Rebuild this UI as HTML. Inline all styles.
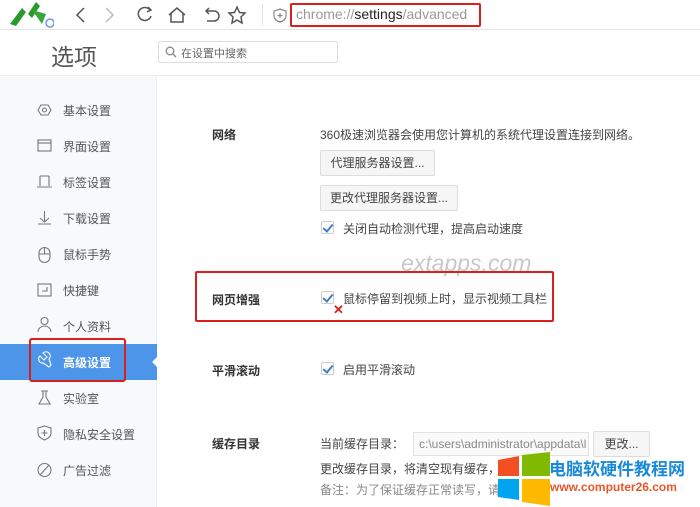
<!DOCTYPE html>
<html><head><meta charset="utf-8"><style>
*{margin:0;padding:0;box-sizing:border-box}
body{width:700px;height:507px;overflow:hidden;background:#fff;font-family:"Liberation Sans","Noto Sans CJK SC",sans-serif;color:#333;position:relative;font-size:12px}
.a{position:absolute;white-space:nowrap}
.side{position:absolute;left:0;top:76px;width:157px;height:431px;background:#f7f9fb;border-right:1px solid #eceff2}
.it{position:absolute;left:63px;font-size:12px;color:#555}
.ic{position:absolute;left:38px;width:14px;height:14px}
.btn{position:absolute;border:1px solid #ddd;background:#f6f6f6;border-radius:2px;font-size:12px;color:#444;text-align:center}
.cb{position:absolute;width:13px;height:13px;border:1px solid #ccc;background:#fff;border-radius:2px}
.cb::after{content:"";position:absolute;left:3px;top:0px;width:4px;height:8px;border:solid #3d7fc8;border-width:0 2px 2px 0;transform:rotate(40deg)}
.lbl{position:absolute;left:212px;font-size:12px;font-weight:bold;color:#333}
</style></head><body>
<!-- top bar -->
<div class="a" style="left:0;top:0;width:700px;height:30px;background:#fff;border-bottom:1px solid #e6e6e6"></div>
<svg class="a" style="left:6px;top:0" width="48" height="28" viewBox="0 0 48 28"><path d="M4 24 L16 8 L22 14 L30 2 L34 6 L26 18 L20 12 L10 26Z" fill="#2a9a2a"/><path d="M26 10 L40 14 L36 24Z" fill="#3aa53a"/><circle cx="44" cy="23" r="4" fill="none" stroke="#6a9be0" stroke-width="1.5"/></svg>
<svg class="a" style="left:70px;top:5px" width="190" height="20" viewBox="0 0 190 20" fill="none" stroke="#555" stroke-width="1.5"><path d="M14 3 L7 10 L14 17"/><path d="M36 3 L43 10 L36 17" stroke="#bbb"/><path d="M80 5 A6.5 6.5 0 1 0 81 11"/><path d="M78 2 L81 5 L77 7"/><path d="M99 10 L107 3 L115 10 M101 8 V17 H113 V8"/><path d="M136 6 H144 A5 5 0 0 1 144 16 H137 M139 3 L136 6 L139 9"/><path d="M167 2 L169.5 7.5 L175 8 L171 12 L172 18 L167 15 L162 18 L163 12 L159 8 L164.5 7.5Z"/></svg>
<div class="a" style="left:262px;top:4px;width:1px;height:22px;background:#e3e3e3"></div>
<svg class="a" style="left:273px;top:8px" width="14" height="15" viewBox="0 0 14 15" fill="none" stroke="#888" stroke-width="1.2"><path d="M7 1 L13 3 V8 C13 11 10 13 7 14 C4 13 1 11 1 8 V3Z"/><path d="M7 5 V10 M4.5 7.5 H9.5"/></svg>
<div class="a" style="left:290px;top:3px;width:191px;height:24px;border:2px solid #d9201c;border-radius:2px"></div>
<div class="a" style="left:296px;top:6px;font-size:14px;color:#999">chrome://<span style="color:#222">settings</span>/advanced</div>
<!-- header -->
<div class="a" style="left:0;top:31px;width:700px;height:45px;border-bottom:1px solid #e9ecef"></div>
<div class="a" style="left:51px;top:38px;font-size:23px;color:#555">选项</div>
<div class="a" style="left:158px;top:41px;width:180px;height:22px;border:1px solid #ddd;border-radius:2px"></div>
<svg class="a" style="left:165px;top:46px" width="12" height="12" viewBox="0 0 12 12" fill="none" stroke="#888" stroke-width="1.3"><circle cx="5" cy="5" r="3.8"/><path d="M8 8 L11 11"/></svg>
<div class="a" style="left:181px;top:45px;font-size:11px;color:#666">在设置中搜索</div>
<!-- sidebar -->
<div class="side"></div>
<div class="a" style="left:0;top:344px;width:157px;height:36px;background:#4d95e9"></div>
<div class="a" style="left:152px;top:356px;width:0;height:0;border:6px solid transparent;border-right-color:#fff;border-left:none"></div>
<div class="a" style="left:29px;top:338px;width:97px;height:44px;border:2px solid #d9201c;border-radius:3px"></div>
<svg class="a" style="left:36px;top:101px" width="18" height="380" viewBox="0 0 18 380" fill="none" stroke="#777" stroke-width="1.1">
<path d="M5 4 H12 L15 9 L12 14 H5 L2 9Z"/><circle cx="8.5" cy="9" r="2"/>
<rect x="2" y="39" width="13" height="11"/><path d="M2 42 H15"/>
<path d="M4 75 V85 M13 75 V85 M4 75 H13 M1 86 H16"/>
<path d="M8.5 110 V121 M4 117 L8.5 121 L13 117 M2 123 H15"/>
<path d="M3 152 A5.5 5.5 0 0 1 14 152 V156 A5.5 5.5 0 0 1 3 156Z M3 153 H14 M8.5 147 V153"/>
<rect x="2" y="183" width="13" height="12"/><path d="M6 190 H11 V186"/>
<circle cx="8.5" cy="220" r="3.5"/><path d="M2 231 A6.5 6 0 0 1 15 231"/>
<path d="M4 255 L8 259 L11 256 L7 252 A4 4 0 0 1 13 258 L15 264 L13 266 L7 262 A4 4 0 0 1 4 255Z" stroke="#fff"/>
<path d="M5 290 H12 M7 290 V296 L3 303 H14 L10 296 V290"/>
<path d="M8.5 325 L15 327 V332 C15 336 11 338 8.5 339 C6 338 2 336 2 332 V327Z M8.5 329 V335 M5.5 332 H11.5"/>
<circle cx="8.5" cy="369" r="6.5"/><path d="M4 374 L13 364"/>
</svg>
<div class="it" style="top:102px">基本设置</div>
<div class="it" style="top:138px">界面设置</div>
<div class="it" style="top:174px">标签设置</div>
<div class="it" style="top:210px">下载设置</div>
<div class="it" style="top:246px">鼠标手势</div>
<div class="it" style="top:282px">快捷键</div>
<div class="it" style="top:318px">个人资料</div>
<div class="it" style="top:354px;color:#fff;font-weight:bold">高级设置</div>
<div class="it" style="top:390px">实验室</div>
<div class="it" style="top:426px">隐私安全设置</div>
<div class="it" style="top:462px">广告过滤</div>
<!-- main -->
<div class="lbl" style="top:126px">网络</div>
<div class="a" style="left:320px;top:126px;font-size:12px;color:#444">360极速浏览器会使用您计算机的系统代理设置连接到网络。</div>
<div class="btn" style="left:320px;top:150px;width:115px;height:26px;line-height:24px">代理服务器设置...</div>
<div class="btn" style="left:320px;top:185px;width:138px;height:26px;line-height:24px">更改代理服务器设置...</div>
<div class="cb" style="left:321px;top:221px"></div>
<div class="a" style="left:343px;top:220px;color:#444">关闭自动检测代理，提高启动速度</div>
<div class="a" style="left:401px;top:250px;font-size:23px;font-style:italic;color:#c8c8c8">extapps.com</div>
<div class="a" style="left:195px;top:271px;width:359px;height:51px;border:2px solid #d9201c;border-radius:2px"></div>
<div class="lbl" style="top:291px">网页增强</div>
<div class="cb" style="left:321px;top:291px"></div>
<div class="a" style="left:343px;top:290px;color:#444">鼠标停留到视频上时，显示视频工具栏</div>
<div class="a" style="left:333px;top:302px;color:#d9201c;font-weight:bold;font-size:13px">✕</div>
<div class="lbl" style="top:362px">平滑滚动</div>
<div class="cb" style="left:321px;top:362px"></div>
<div class="a" style="left:343px;top:361px;color:#444">启用平滑滚动</div>
<div class="lbl" style="top:435px">缓存目录</div>
<div class="a" style="left:320px;top:435px;color:#444">当前缓存目录：</div>
<div class="a" style="left:413px;top:432px;width:176px;height:24px;border:1px solid #e2e2e2;background:#fafafa;overflow:hidden;font-size:12px;color:#888;padding:4px 5px">c:\users\administrator\appdata\l</div>
<div class="btn" style="left:593px;top:431px;width:57px;height:26px;line-height:24px">更改...</div>
<div class="a" style="left:320px;top:460px;color:#444">更改缓存目录，将清空现有缓存，</div>
<div class="a" style="left:320px;top:481px;color:#888">备注：为了保证缓存正常读写，请</div>
<svg class="a" style="left:495px;top:452px" width="60" height="55" viewBox="0 0 60 55"><path d="M3 8 L24 4 V24 H3Z" fill="#f25022"/><path d="M27 3 L55 0 V24 H27Z" fill="#7fba00"/><path d="M3 27 H24 V48 L3 45Z" fill="#00a4ef"/><path d="M27 27 H55 V54 L27 50Z" fill="#ffb900"/></svg>
<div class="a" style="left:549px;top:455px;font-size:17px;font-weight:bold;color:#1a8ad8">电脑软硬件教程网</div>
<div class="a" style="left:550px;top:480px;font-size:12px;font-weight:bold;color:#e8562a">www.computer26.com</div>
</body></html>
